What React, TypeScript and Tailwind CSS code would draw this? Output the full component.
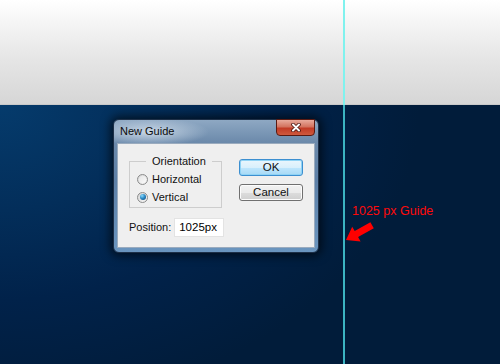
const font = "font-['Liberation_Sans',Arial,sans-serif]"

function Radio({ checked }: { checked?: boolean }) {
    return (
        <span className="w-[11px] h-[11px] rounded-full border border-[#8b8c8c] bg-[linear-gradient(135deg,#d5d5d5,#f7f7f7)] flex items-center justify-center">
            {checked ? (
                <span className="w-[6px] h-[6px] rounded-full bg-[radial-gradient(circle_at_35%_30%,#8fdcfb_0%,#2b8bc8_45%,#0d3f6e_100%)]" />
            ) : (
                <span className="w-[7px] h-[7px] rounded-full bg-[linear-gradient(135deg,#e6e6e6,#fafafa)]" />
            )}
        </span>
    )
}

function NewGuideDialog() {
    return (
        <div className={`absolute left-[113px] top-[119px] w-[206px] h-[134px] flex flex-col rounded-[6px] border border-[#1d2f47] bg-[linear-gradient(to_bottom,#8ea8c3_0px,#6c8aab_22px,#5d80a7_60px,#6a95bf_100%)] shadow-[0_0_10px_3px_rgba(0,0,0,0.6)] ${font}`}>
            <div className="h-[23px] flex justify-between items-start pl-[6px] pr-[3px] bg-[radial-gradient(ellipse_60px_14px_at_35px_12px,rgba(225,235,245,0.75),rgba(225,235,245,0))]">
                <span className="pt-[5px] text-[11px] leading-[13px] text-[#0b0b0b]">New Guide</span>
                <button className="w-[39px] h-[17px] -mt-px rounded-b-[4px] border border-[#5a1a12] bg-[linear-gradient(to_bottom,#e8aa9c_0%,#d3735f_45%,#c23b26_55%,#cf5a3e_100%)] flex items-center justify-center">
                    <svg width="10" height="9" viewBox="0 0 10 9">
                        <path d="M2 1.5 L8 7.5 M8 1.5 L2 7.5" stroke="#4a1510" strokeWidth="3.6" strokeLinecap="round" />
                        <path d="M2 1.5 L8 7.5 M8 1.5 L2 7.5" stroke="#ffffff" strokeWidth="2" strokeLinecap="round" />
                    </svg>
                </button>
            </div>

            <div className="mx-[3px] h-[105px] border border-[#9aabbe] bg-[#efefef] flex flex-col pl-[11px] pt-[11px] text-[11px] text-[#111]">
                <div className="flex items-start">
                    <fieldset className="w-[93px] h-[53px] border border-[#cdcdcd] pl-[7px] pt-[2px]">
                        <legend className="ml-[9px] px-[6px] leading-[13px]">Orientation</legend>
                        <div className="h-[18px] flex items-center gap-[4px]">
                            <Radio />
                            <span>Horizontal</span>
                        </div>
                        <div className="h-[18px] flex items-center gap-[4px]">
                            <Radio checked />
                            <span>Vertical</span>
                        </div>
                    </fieldset>

                    <div className="ml-[17px] mt-[4px] flex flex-col gap-[8px]">
                        <button className="w-[64px] h-[17px] rounded-[3px] border border-[#3c8fd0] shadow-[inset_0_0_0_1px_#8fd3f5] bg-[linear-gradient(to_bottom,#eaf6fd_0%,#d9f0fc_50%,#bee6fd_51%,#a7d9f5_100%)] leading-none text-[11.5px]">
                            OK
                        </button>
                        <button className="w-[64px] h-[17px] rounded-[3px] border border-[#707070] shadow-[inset_0_0_0_1px_#fcfcfc] bg-[linear-gradient(to_bottom,#f2f2f2_0%,#ebebeb_50%,#dddddd_51%,#cfcfcf_100%)] leading-none text-[11.5px]">
                            Cancel
                        </button>
                    </div>
                </div>

                <div className="mt-[10px] flex items-center gap-[3px]">
                    <span>Position:</span>
                    <div className="w-[50px] h-[19px] bg-white border border-[#e3e3e3] pl-[4px] flex items-center text-[11.5px] text-black">
                        1025px
                    </div>
                </div>
            </div>
        </div>
    )
}

export default function App() {
    return (
        <div className="relative w-[500px] h-[364px] overflow-hidden">
            <div className="h-[104px] bg-[linear-gradient(to_bottom,#ffffff_0%,#f8f8f8_15%,#e6e6e6_55%,#d6d6d6_100%)]" />
            <div className="h-px bg-[#c9c9c9]" />
            <div className="h-[259px] bg-[radial-gradient(ellipse_420px_300px_at_0%_0%,#053b6c_0%,#032e5a_35%,#01224a_65%,#011c3a_100%)]" />

            {/* guide line */}
            <div className="absolute left-[343px] top-0 w-[2px] h-[364px] bg-[linear-gradient(to_bottom,#80f2ee_105px,#3cb4c2_105px)]" />

            <NewGuideDialog />

            <span className="absolute left-[352px] top-[205px] text-[12.5px] leading-none text-[#ff0a0a] font-['Liberation_Sans',Arial,sans-serif]">
                1025 px Guide
            </span>
            <svg className="absolute left-[340px] top-[220px]" width="40" height="28" viewBox="0 0 40 28">
                <polygon
                    points="6,20 20.6,21.5 18.1,17.1 33.8,8.3 30.4,2.3 14.7,11.1 12.2,6.7"
                    fill="#ff0000"
                />
            </svg>
        </div>
    )
}
